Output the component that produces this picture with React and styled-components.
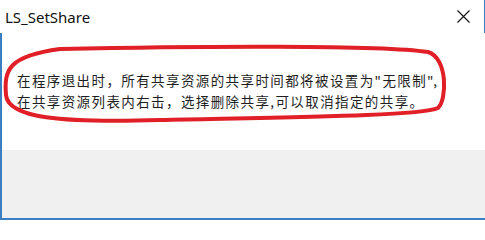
import React from "react";
import styled, { createGlobalStyle } from "styled-components";

const GlobalStyle = createGlobalStyle`
  html, body {
    margin: 0;
    padding: 0;
    background: #ffffff;
  }
  body {
    font-family: "Noto Sans", "Noto Sans CJK SC", sans-serif;
  }
`;

const Window = styled.div`
  position: relative;
  width: 485px;
  height: 220px;
  display: flex;
  flex-direction: column;
  background: #ffffff;
  overflow: hidden;
`;

const TitleBar = styled.div`
  height: 33px;
  display: flex;
  align-items: center;
  justify-content: space-between;
  padding: 0 13px 0 5px;
  border-right: 1px solid #3a7fc1;
  box-sizing: border-box;
`;

const Title = styled.span`
  font-family: "Noto Sans", "Noto Sans CJK SC", sans-serif;
  font-size: 15px;
  color: #111111;
  margin-top: 1px;
`;

const CloseButton = styled.button`
  width: 16px;
  height: 16px;
  padding: 0;
  border: none;
  background: transparent;
  display: flex;
  align-items: center;
  justify-content: center;
`;

const Body = styled.div`
  height: 117px;
  box-sizing: border-box;
  border-left: 2px solid #3a7fc1;
  padding: 37px 0 0 15px;
`;

const Message = styled.p`
  margin: 0;
  font-family: "Noto Sans CJK SC", sans-serif;
  font-size: 13.5px;
  line-height: 21px;
  letter-spacing: 1.4px;
  color: #1e1e1e;
  white-space: nowrap;
`;

const Footer = styled.div`
  flex: 1;
  background: #f0f0f0;
  border-left: 2px solid #3a7fc1;
  border-bottom: 2px solid #3a7fc1;
`;

const Annotation = styled.svg`
  position: absolute;
  left: 0;
  top: 0;
  pointer-events: none;
`;

export default function App() {
  return (
    <>
      <GlobalStyle />
      <Window>
        <TitleBar>
          <Title>LS_SetShare</Title>
          <CloseButton aria-label="close">
            <svg width="13" height="13" viewBox="0 0 13 13">
              <path d="M0.5 0.5 L12.5 12.5 M12.5 0.5 L0.5 12.5" stroke="#111" strokeWidth="1.1" fill="none" />
            </svg>
          </CloseButton>
        </TitleBar>
        <Body>
          <Message>
            在程序退出时，所有共享资源的共享时间都将被设置为"无限制",
            <br />
            在共享资源列表内右击，选择删除共享,可以取消指定的共享。
          </Message>
        </Body>
        <Footer />
        <Annotation width="485" height="220" viewBox="0 0 485 220">
          <path
            d="M60 49 C 200 46, 380 45, 428 52 C 448 58, 447 100, 438 108 C 420 116, 300 117, 160 120 C 60 123, 8 118, 6 95 C 4 70, 8 56, 60 49 Z"
            stroke="#e01f26"
            strokeWidth="4"
            fill="none"
          />
        </Annotation>
      </Window>
    </>
  );
}
